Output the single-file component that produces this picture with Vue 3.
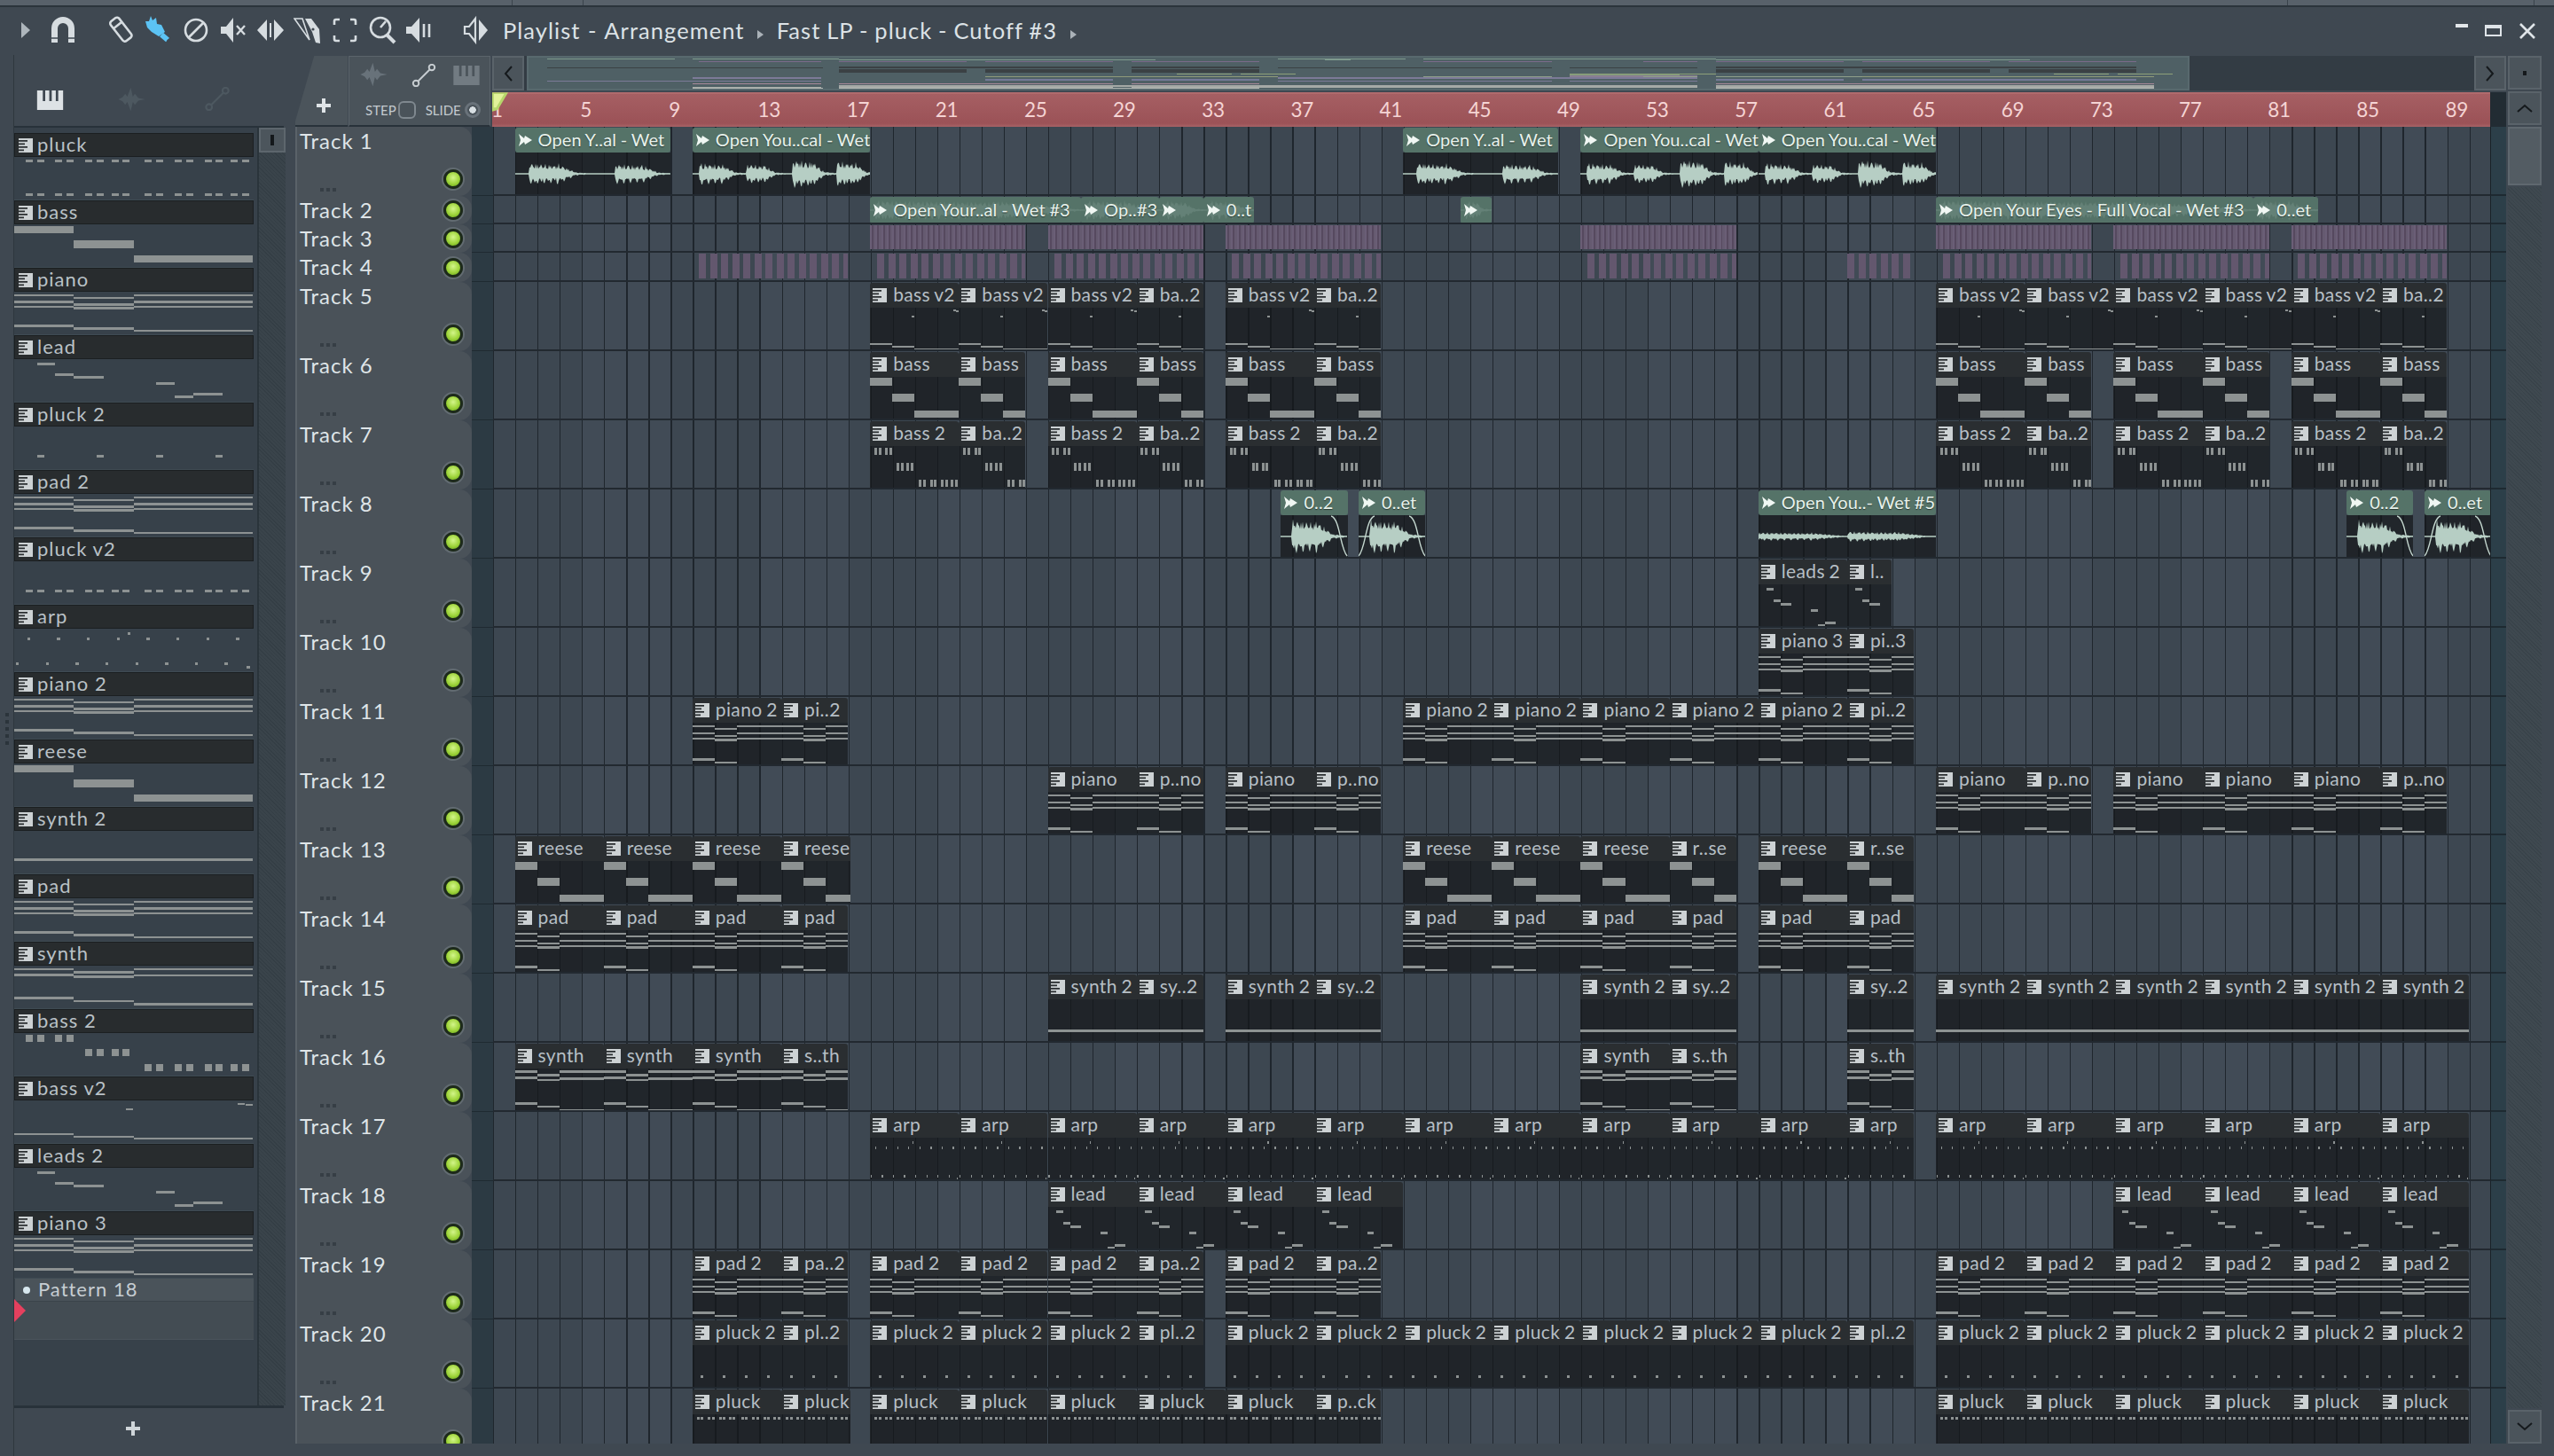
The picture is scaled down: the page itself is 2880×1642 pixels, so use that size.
<script setup>
const BAR = 25.04
const LIST_BAR = 67.25

const seg = (x, w, ys, h = 2.5) => ys.map(y => [x, w, y, h])
const dashX = [.19, .38, .69, .88, 1.19, 1.38, 1.63, 1.82, 2.19, 2.38, 2.69, 2.88, 3.19, 3.38, 3.63, 3.82]
const chord = [...seg(0, 1, [2.7, 10, 15.7, 37]), ...seg(1, 1, [5.7, 13, 17, 40]), ...seg(2, 2, [2.7, 10, 15.7, 42.7])]
const leadNotes = [[.38, .3, 3.7, 3], [.69, .31, 16.3, 3], [1, .5, 19.3, 3], [2.38, .31, 25.6, 3], [2.69, .31, 41.3, 3], [3, .5, 38.3, 3]]
const fatBars = [[0, 1, 1.7, 8.6], [1, 1, 18, 8.6], [2, 2, 34.5, 8.6]]
const arpNotes = [
  ...[0, 1, 2, 3, 4, 5, 6, 7].map(i => [.22 + i * .5, .05, 9.7, 3]),
  ...[0, 1, 2, 3, 4, 5, 6, 7].map(i => [.03 + i * .5, .05, 38.3, 3]),
  [1.9, .05, 3.7, 3], [3.9, .05, 41.7, 3],
]

const patterns = {
  pluck: [...dashX.map(x => [x, .12, 3.3, 3]), ...dashX.map(x => [x, .12, 41.3, 3])],
  bass: fatBars,
  piano: chord,
  lead: leadNotes,
  'pluck 2': [.38, 1.38, 2.38, 3.38].map(x => [x, .12, 31.6, 3]),
  'pad 2': chord,
  'pluck v2': dashX.map(x => [x, .12, 32, 3]),
  arp: arpNotes,
  'piano 2': chord,
  reese: fatBars,
  'synth 2': [[0, 4, 31.4, 3]],
  pad: chord,
  synth: [...seg(0, 1, [2.5, 9, 35]), ...seg(1, 1, [6, 11, 38.5]), ...seg(2, 2, [2.5, 9.5, 42])],
  'bass 2': dashX.map((x, i) => [x, .12, i < 4 ? 1.8 : i < 8 ? 18 : 34.6, 8.4]),
  'bass v2': [[0, 1, 37, 2], [1, 1, 39.6, 2], [2, 2, 42, 2], [1.88, .12, 9, 2], [3.75, .12, 2.5, 2], [3.88, .12, 3.5, 2]],
  'leads 2': leadNotes,
  'piano 3': chord,
}
const channels = Object.keys(patterns).map(name => ({ name, notes: patterns[name] }))

// "17-21 29-32:ba..2" -> clips of one pattern
const pat = (name, spec) => spec.split(' ').map(part => {
  const [range, label] = part.split(':')
  const [s, e] = range.split('-').map(Number)
  return { kind: 'pattern', s, e, label: label || name, notes: patterns[name] }
})

const vocalA = [[.63, 2.7, 13], [4.5, 6.4, 12]]
const vocalB = [[.3, 1.9, 13], [2.4, 3.7, 12], [4.5, 5.9, 17], [6.5, 7.8, 15]]
const vocalC = [[0, 3.8, 5], [4, 7.5, 6]]
const hit = [[.5, 2.3, 20]]

const audio = (s, e, label, events, fade = '') => ({ kind: 'audio', s, e, label, events, fade })
const slim = (s, e, label) => ({ kind: 'slim', s, e, label, events: [[.2, e - s - .4, 12]] })
const stripes = (kind, pairs) => pairs.map(([s, e]) => ({ kind, s, e }))

const from65 = '65-69 69-73 73-77 77-81 81-85 85-89'
const trackClips = [
  [audio(1, 8, 'Open Y..al - Wet', vocalA), audio(9, 17, 'Open You..cal - Wet', vocalB), audio(41, 48, 'Open Y..al - Wet', vocalA),
    audio(49, 57, 'Open You..cal - Wet', vocalB), audio(57, 65, 'Open You..cal - Wet', vocalB)],
  [slim(17, 26.5, 'Open Your..al - Wet #3'), slim(26.5, 30, 'Op..#3'), slim(30, 32, ''), slim(32, 34.3, '0..t'), slim(43.6, 45, ''),
    slim(65, 79.3, 'Open Your Eyes - Full Vocal - Wet #3'), slim(79.3, 82.2, '0..et')],
  stripes('fine', [[17, 24], [25, 32], [33, 40], [49, 56], [65, 72], [73, 80], [81, 88]]),
  stripes('pills', [[9.3, 16], [17.3, 24], [25.3, 32], [33.3, 40], [49.3, 56], [61, 64], [65.3, 72], [73.3, 80], [81.3, 88]]),
  pat('bass v2', '17-21 21-25 25-29 29-32:ba..2 33-37 37-40:ba..2 65-69 69-73 73-77 77-81 81-85 85-88:ba..2'),
  pat('bass', '17-21 21-24 25-29 29-32 33-37 37-40 65-69 69-72 73-77 77-80 81-85 85-88'),
  pat('bass 2', '17-21 21-24:ba..2 25-29 29-32:ba..2 33-37 37-40:ba..2 65-69 69-72:ba..2 73-77 77-80:ba..2 81-85 85-88:ba..2'),
  [audio(35.5, 38.5, '0..2', hit, 'out'), audio(39, 42, '0..et', hit, 'both'), audio(57, 65, 'Open You..- Wet #5', vocalC),
    audio(83.5, 86.5, '0..2', hit, 'out'), audio(87, 90, '0..et', hit, 'both')],
  pat('leads 2', '57-61 61-63:l..'),
  pat('piano 3', '57-61 61-64:pi..3'),
  pat('piano 2', '9-13 13-16:pi..2 41-45 45-49 49-53 53-57 57-61 61-64:pi..2'),
  pat('piano', '25-29 29-32:p..no 33-37 37-40:p..no 65-69 69-72:p..no 73-77 77-81 81-85 85-88:p..no'),
  pat('reese', '1-5 5-9 9-13 13-16.1 41-45 45-49 49-53 53-56:r..se 57-61 61-64:r..se'),
  pat('pad', '1-5 5-9 9-13 13-16 41-45 45-49 49-53 53-56 57-61 61-64'),
  pat('synth 2', `25-29 29-32:sy..2 33-37 37-40:sy..2 49-53 53-56:sy..2 61-64:sy..2 ${from65}`),
  pat('synth', '1-5 5-9 9-13 13-16:s..th 49-53 53-56:s..th 61-64:s..th'),
  pat('arp', `17-21 21-25 25-29 29-33 33-37 37-41 41-45 45-49 49-53 53-57 57-61 61-64 ${from65}`),
  pat('lead', '25-29 29-33 33-37 37-41 73-77 77-81 81-85 85-89'),
  pat('pad 2', `9-13 13-16:pa..2 17-21 21-25 25-29 29-32:pa..2 33-37 37-40:pa..2 ${from65}`),
  pat('pluck 2', `9-13 13-16:pl..2 17-21 21-25 25-29 29-32:pl..2 33-37 37-41 41-45 45-49 49-53 53-57 57-61 61-64:pl..2 ${from65}`),
  pat('pluck', `9-13 13-16.1 17-21 21-25 25-29 29-33 33-37 37-40:p..ck ${from65}`),
]

const smallTracks = [2, 3, 4]
const tracks = trackClips.map((clips, i) => ({ n: i + 1, small: smallTracks.includes(i + 1), clips }))

// overview row for each track: [top, height, colour]
const overviewRows = [
  [1, 1, '#7f9a8e'], [2, 1, '#7f9a8e'], [4, 1, '#7a6a8a'], [4, 1, '#7a6a8a'], [10, 2, '#3b4144'], [13, 2, '#3b4144'], [15, 2, '#3b4144'],
  [18, 1, '#8ea07a'], [19, 1, '#7f9a7a'], [20, 2, '#8a7f92'], [22, 2, '#7c7a98'], [24, 2, '#757a98'], [11, 1, '#3b4144'], [26, 1, '#7c7a98'],
  [21, 1, '#8f9f8a'], [26, 1, '#7c7a98'], [31, 2, '#a5a9a6'], [21, 1, '#8f9a7a'], [29, 1, '#a8899a'], [33, 1, '#a8aca8'], [34, 1, '#b4b8b4'],
]
const overview = tracks.flatMap((t, i) => t.clips.map(c => ({
  left: c.s * 20.6 + 'px', width: (c.e - c.s) * 20.6 + 'px',
  top: overviewRows[i][0] + 'px', height: overviewRows[i][1] + 'px', background: overviewRows[i][2],
})))

const rulerMarks = Array.from({ length: 23 }, (_, i) => 1 + i * 4)

const clipStyle = c => ({ left: c.s * BAR + 'px', width: (c.e - c.s) * BAR + 'px' })
const noteStyle = (n, unit, yScale) => ({
  left: n[0] * unit + 'px', width: n[1] * unit + 'px', top: n[2] * yScale + 'px', height: n[3] + 'px',
})

// fake but steady waveform, built from bars of [start, end, amplitude]
function wavePath(c, mid) {
  const width = Math.round((c.e - c.s) * BAR)
  const top = []
  const bottom = []
  for (let x = 0; x <= width; x++) {
    const bar = x / BAR
    let up = .7
    let down = .7
    for (const [s, e, amp] of c.events) {
      if (bar < s || bar > e + 1) continue
      const t = (bar - s) / (e - s)
      const env = t > 1 ? Math.max(0, 1 - (t - 1) * (e - s)) * .16 : t > .6 ? 1 - (t - .6) * 2 : 1 - t * .3
      const n1 = .42 + .58 * Math.abs(Math.sin(x * 1.7) * Math.cos(x * .63 + s))
      const n2 = .42 + .58 * Math.abs(Math.sin(x * 2.3 + 1) * Math.cos(x * .41 + e))
      up = Math.max(up, amp * env * n1)
      down = Math.max(down, amp * env * n2)
    }
    top.push(`${x} ${(mid - up).toFixed(1)}`)
    bottom.unshift(`${x} ${(mid + down).toFixed(1)}`)
  }
  return 'M' + top.join('L') + 'L' + bottom.join('L') + 'Z'
}
</script>

<template>
  <div class="app">
    <div class="top-strip"><i class="d1"></i><i class="d2"></i><i class="d3"></i><i class="d4"></i></div>

    <div class="titlebar">
      <span class="ico"><svg viewBox="0 0 32 32"><path d="M11 7l10 9-10 9z" fill="#aeb6bc"/></svg></span>
      <span class="ico"><svg viewBox="0 0 32 32"><path d="M3 30V14a13 13 0 0 1 26 0v16h-7V14a6 6 0 0 0-12 0v16z" fill="#d6dce0"/><path d="M3 25h7M22 25h7" stroke="#3e4750" stroke-width="1.5"/></svg></span>
      <span class="gap-a"></span>
      <span class="ico"><svg viewBox="0 0 32 32"><g transform="rotate(-38 16 16)" fill="none" stroke="#d6dce0" stroke-width="2.6"><rect x="10" y="1" width="12" height="28" rx="3"/><path d="M10 9h12"/></g></svg></span>
      <span class="ico"><svg viewBox="0 0 32 32"><path d="M7 0l2 5 4-3 1 7 5 1 4 8-7 5-8-5-5-5-2-7 4 0z" fill="#5cc3f4"/><path d="M19 21l7 6" stroke="#5cc3f4" stroke-width="6"/><circle cx="27" cy="28" r="1.8" fill="#3e4750"/></svg></span>
      <span class="ico"><svg viewBox="0 0 32 32"><circle cx="16" cy="16" r="12" fill="none" stroke="#d6dce0" stroke-width="2.6"/><path d="M8 24L24 8" stroke="#d6dce0" stroke-width="2.6"/></svg></span>
      <span class="ico"><svg viewBox="0 0 32 32"><path d="M2 12h6l8-10v28l-8-10H2z" fill="#d6dce0"/><path d="M20 11l9 10M29 11l-9 10" stroke="#d6dce0" stroke-width="2.4"/></svg></span>
      <span class="ico"><svg viewBox="0 0 32 32"><path d="M1 16l11-12v24zM31 16L20 4v24z" fill="#d6dce0"/><path d="M16 8v16" stroke="#d6dce0" stroke-width="2"/></svg></span>
      <span class="ico"><svg viewBox="0 0 32 32"><path d="M1 3h9l8 24z" fill="none" stroke="#d6dce0" stroke-width="1.6"/><path d="M13 3h7l9 12 1 16-5 -1-4-12z" fill="#d6dce0"/><circle cx="22" cy="15" r="1.6" fill="#3e4750"/></svg></span>
      <span class="ico"><svg viewBox="0 0 32 32"><path d="M10 4H6a2 2 0 0 0-2 2v4M22 4h4a2 2 0 0 1 2 2v4M10 28H6a2 2 0 0 1-2-2v-4M22 28h4a2 2 0 0 0 2-2v-4" fill="none" stroke="#d6dce0" stroke-width="2.6"/></svg></span>
      <span class="ico"><svg viewBox="0 0 32 32"><circle cx="14" cy="13" r="11" fill="none" stroke="#d6dce0" stroke-width="2.6"/><path d="M21 21l9 9" stroke="#d6dce0" stroke-width="4"/><path d="M14 13l6-7" stroke="#d6dce0" stroke-width="2.6"/></svg></span>
      <span class="ico"><svg viewBox="0 0 32 32"><path d="M1 12h6l9-10v28l-9-10H1z" fill="#d6dce0"/><path d="M21 9v15M27 9v15" stroke="#d6dce0" stroke-width="2.6"/></svg></span>
      <span class="gap-b"></span>
      <span class="ico"><svg viewBox="0 0 32 32"><path d="M3 12h5l7-9v26l-7-9H3z" fill="none" stroke="#d6dce0" stroke-width="2.2"/><path d="M19 4l10 12-10 12z" fill="#d6dce0"/></svg></span>
      <div class="title">
        Playlist - Arrangement <b class="sep"></b> <span class="title-b">Fast LP - pluck - Cutoff #3</span> <b class="sep"></b>
      </div>
      <div class="win-btns">
        <span class="win min"></span>
        <span class="win max"></span>
        <svg class="win-x" viewBox="0 0 20 20"><path d="M2 2l16 16M18 2L2 18" stroke="#dfe4e8" stroke-width="2.6"/></svg>
      </div>
    </div>

    <div class="body">
      <div class="edge"></div>

      <div class="channels">
        <div class="chan-tools">
          <svg class="t-piano" viewBox="0 0 32 24"><path d="M0 0h32v24H0z" fill="#dde2e5"/><path d="M7 0h3v13H7zM15 0h3v13h-3zM23 0h3v13h-3z" fill="#3e4750"/></svg>
          <svg class="t-wave" viewBox="0 0 40 36"><path d="M0 18l6-3 4-5 3 4 5-13 3 13 3-4 5 6 10 2-10 2-5 6-3-4-3 13-5-13-3 4-4-5z" fill="#4d5860"/></svg>
          <svg class="t-auto" viewBox="0 0 32 32"><circle cx="5" cy="27" r="4" fill="none" stroke="#4d5860" stroke-width="2.5"/><circle cx="27" cy="5" r="4" fill="none" stroke="#4d5860" stroke-width="2.5"/><path d="M8 24L24 8" stroke="#4d5860" stroke-width="2.5"/></svg>
        </div>
        <div class="chan-mid">
          <div class="chan-list">
            <div v-for="c in channels" :key="c.name" class="chan">
              <div class="chan-head">
                <svg class="roll" viewBox="0 0 16 16"><path d="M0 0h16v16H0z" fill="#cdd2d4"/><path d="M0 2h10v1.7H0zM0 5.5h7v1.7H0zM0 9h10v1.7H0zM0 12.5h6v1.7H0z" fill="#2a2e30"/></svg>
                <span>{{ c.name }}</span>
              </div>
              <div class="chan-prev">
                <i v-for="(n, i) in c.notes" :key="i" class="note" :style="noteStyle(n, LIST_BAR, 1)"></i>
              </div>
            </div>
            <div class="pattern-row"><b></b><span>Pattern 18</span></div>
            <div class="pattern-empty"></div>
            <svg class="sel-mark" viewBox="0 0 13 26"><path d="M0 0l13 13L0 26z" fill="#e5405e"/></svg>
          </div>
          <div class="chan-scroll">
            <div class="chan-btn"><i></i></div>
          </div>
          <div class="grip"><i></i><i></i><i></i><i></i><i></i></div>
        </div>
        <div class="chan-foot">
          <svg viewBox="0 0 16 16"><path d="M6 0h4v6h6v4h-6v6H6v-6H0V6h6z" fill="#cfd5d9"/></svg>
        </div>
      </div>

      <div class="play">
        <div class="main">
          <div class="head">
            <div class="tab"><svg viewBox="0 0 16 16"><path d="M6 0h4v6h6v4h-6v6H6v-6H0V6h6z" fill="#dfe4e7"/></svg></div>
            <div class="tools">
              <div class="tool-icons">
                <svg class="i-wave" viewBox="0 0 40 36"><path d="M0 18l6-3 4-5 3 4 5-13 3 13 3-4 5 6 10 2-10 2-5 6-3-4-3 13-5-13-3 4-4-5z" fill="#68727a"/></svg>
                <svg class="i-auto" viewBox="0 0 32 32"><circle cx="5" cy="27" r="4" fill="none" stroke="#c7cdd1" stroke-width="2.4"/><circle cx="27" cy="5" r="4" fill="none" stroke="#c7cdd1" stroke-width="2.4"/><path d="M8 24L24 8" stroke="#c7cdd1" stroke-width="2.4"/></svg>
                <svg class="i-piano" viewBox="0 0 32 24"><path d="M0 0h32v24H0z" fill="#727b82"/><path d="M7 0h3v13H7zM15 0h3v13h-3zM23 0h3v13h-3z" fill="#4b545b"/></svg>
              </div>
              <div class="tool-row">
                <span>STEP</span><b class="step-box"></b>
                <span class="slide">SLIDE</span><b class="radio"></b>
              </div>
            </div>
            <div class="timeline">
              <div class="over-row">
                <div class="nav"><svg viewBox="0 0 12 20"><path d="M10 2L3 10l7 8" fill="none" stroke="#15191c" stroke-width="2"/></svg></div>
                <div class="overview"><div class="over-inner"><i v-for="(o, i) in overview" :key="i" :style="o"></i></div></div>
                <div class="nav nav-r"><svg viewBox="0 0 12 20"><path d="M2 2l7 8-7 8" fill="none" stroke="#15191c" stroke-width="2"/></svg></div>
              </div>
              <div class="ruler-row">
                <div class="ruler">
                  <span v-for="m in rulerMarks" :key="m" class="mark" :style="{ left: (m - 1) * BAR + 'px' }">{{ m }}</span>
                  <svg class="playhead" viewBox="0 0 20 24"><path d="M0 0h20L7 22 0 24z" fill="#b6d66b"/><path d="M2 2h13L5 19H2z" fill="#e2f29a"/></svg>
                </div>
                <div class="ruler-end"></div>
              </div>
            </div>
          </div>

          <div class="tracks">
            <div v-for="t in tracks" :key="t.n" class="track" :class="{ small: t.small }">
              <div class="thead">
                <span class="tname">Track {{ t.n }}</span>
                <b class="led"></b>
                <em v-if="!t.small" class="dots"><i></i><i></i><i></i></em>
              </div>
              <div class="strip"></div>
              <div class="lane">
                <div v-for="(c, i) in t.clips" :key="i" class="clip" :class="c.kind" :style="clipStyle(c)">
                  <template v-if="c.kind === 'pattern'">
                    <div class="clip-head">
                      <svg class="roll" viewBox="0 0 16 16"><path d="M0 0h16v16H0z" fill="#cdd2d4"/><path d="M0 2h10v1.7H0zM0 5.5h7v1.7H0zM0 9h10v1.7H0zM0 12.5h6v1.7H0z" fill="#2a2e30"/></svg>
                      <span>{{ c.label }}</span>
                    </div>
                    <div class="clip-body">
                      <i v-for="(n, j) in c.notes" :key="j" class="note" :style="noteStyle(n, BAR, 1.1)"></i>
                    </div>
                  </template>
                  <template v-else-if="c.kind === 'audio'">
                    <div class="clip-head green">
                      <svg class="play-ico" viewBox="0 0 16 14"><path d="M1 0l6 5 1-3 8 5-8 5-1-3-6 5 2-7z" fill="#f0f7f3"/></svg>
                      <span>{{ c.label }}</span>
                    </div>
                    <div class="clip-body">
                      <svg class="wave" :width="(c.e - c.s) * BAR" height="47">
                        <path :d="wavePath(c, 24)" fill="#b6cec4"/>
                        <path v-if="c.fade === 'out' || c.fade === 'both'" :d="`M${(c.e - c.s) * BAR - 18} 1 C${(c.e - c.s) * BAR - 8} 4 ${(c.e - c.s) * BAR - 8} 38 ${(c.e - c.s) * BAR} 46`" fill="none" stroke="#c5d8d0" stroke-width="1.4"/>
                        <path v-if="c.fade === 'both'" d="M0 46 C8 38 8 4 18 1" fill="none" stroke="#c5d8d0" stroke-width="1.4"/>
                      </svg>
                    </div>
                  </template>
                  <template v-else-if="c.kind === 'slim'">
                    <div class="clip-head green full">
                      <svg class="wave faint" :width="(c.e - c.s) * BAR" height="30"><path :d="wavePath(c, 15)" fill="#b6cec4"/></svg>
                      <svg class="play-ico" viewBox="0 0 16 14"><path d="M1 0l6 5 1-3 8 5-8 5-1-3-6 5 2-7z" fill="#f0f7f3"/></svg>
                      <span>{{ c.label }}</span>
                    </div>
                  </template>
                </div>
              </div>
              <div class="lane-end"></div>
            </div>
          </div>
        </div>

        <div class="vscroll">
          <div class="vbtn"><i class="dot"></i></div>
          <div class="vbtn"><svg viewBox="0 0 20 12"><path d="M2 10l8-7 8 7" fill="none" stroke="#15191c" stroke-width="2"/></svg></div>
          <div class="thumb"></div>
          <div class="hatch"></div>
          <div class="vbtn last"><svg viewBox="0 0 20 12"><path d="M2 2l8 7 8-7" fill="none" stroke="#15191c" stroke-width="2"/></svg></div>
        </div>
      </div>
    </div>
  </div>
</template>

<style>
html, body { margin: 0; background: #3f4851; }
</style>

<style scoped>
.app { width: 2880px; height: 1642px; display: flex; flex-direction: column; overflow: hidden; background: #3f4851; font-family: Lato, "Open Sans", sans-serif; color: #d6dde1; }

.top-strip { height: 6px; background: #58616a; border-bottom: 2px solid #2b343b; position: relative; flex: none; }
.top-strip i { position: absolute; top: 0; width: 1px; height: 6px; background: #3a434b; }
.d1 { left: 577px; }
.d2 { left: 657px; }
.d3 { left: 2579px; }
.d4 { left: 2857px; }

.titlebar { height: 54px; display: flex; align-items: center; padding: 0 0 3px 8px; box-sizing: border-box; flex: none; }
.ico { width: 42px; height: 32px; display: flex; justify-content: center; flex: none; }
.ico svg { width: 32px; height: 32px; }
.gap-a { width: 24px; }
.gap-b { width: 22px; }
.title { margin-left: 9px; font-size: 25.5px; letter-spacing: 1.05px; color: #dce2e6; white-space: nowrap; word-spacing: 1px; }
.title-b { word-spacing: -.7px; }
.sep { display: inline-block; border-left: 7px solid #aab2b8; border-top: 5px solid transparent; border-bottom: 5px solid transparent; margin: 0 6px; }
.win-btns { margin-left: auto; display: flex; align-items: center; padding: 2px 20px 0 0; }
.win { display: block; }
.min { width: 14px; height: 4px; background: #e3e7ea; margin-right: 19px; margin-top: -12px; }
.max { width: 15px; height: 7px; border: 2px solid #dfe4e8; border-top-width: 4px; margin-right: 19px; }
.win-x { width: 20px; height: 20px; }

.body { flex: 1; display: flex; min-height: 0; }
.edge { width: 15px; border-right: 1px solid #2e373e; flex: none; }

.channels { width: 317px; display: flex; flex-direction: column; flex: none; }
.chan-tools { height: 80px; position: relative; flex: none; }
.t-piano { position: absolute; left: 25px; top: 40px; width: 31px; height: 22px; }
.t-wave { position: absolute; left: 113px; top: 36px; width: 40px; height: 28px; }
.t-auto { position: absolute; left: 213px; top: 36px; width: 32px; height: 27px; }

.chan-mid { flex: 1; display: flex; min-height: 0; position: relative; border-top: 2px solid #28323a; border-bottom: 3px solid #28323a; margin-right: 13px; background: #37414a; }
.chan-list { width: 270px; padding-top: 6px; position: relative; flex: none; }
.chan { height: 76px; }
.chan-head { height: 27px; box-sizing: border-box; background: #282c2e; border: 1px solid #1b1f21; display: flex; align-items: center; font-size: 22px; letter-spacing: 1px; color: #b9c1c6; padding-bottom: 2px; }
.roll { width: 16px; height: 16px; flex: none; margin: 2px 5px 0 4px; }
.chan-prev { height: 49px; position: relative; border-bottom: 1px solid #3f4b53; box-sizing: border-box; }
.note { position: absolute; background: #8d9292; display: block; }
.pattern-row { height: 26px; background: #4a535a; border-bottom: 1px solid #3a434b; display: flex; align-items: center; font-size: 22px; letter-spacing: 1px; color: #c6cdd2; box-sizing: border-box; margin-left: 1px; padding-bottom: 2px; }
.pattern-row b { width: 8px; height: 8px; border-radius: 50%; background: #d7e7ee; margin: 2px 9px 0 9px; }
.pattern-empty { height: 42px; background: #434c53; border-bottom: 1px solid #4b545b; }
.sel-mark { position: absolute; left: 0; top: 1321px; width: 13px; height: 26px; }
.chan-scroll { width: 30px; margin-left: 4px; border-left: 2px solid #2a343b; background: repeating-linear-gradient(45deg, #343e45 0 1px, #3a444b 1px 3px); flex: none; }
.chan-btn { height: 28px; margin: 0; background: #4c555c; border: 2px solid #5d666d; box-sizing: border-box; display: flex; align-items: center; justify-content: center; }
.chan-btn i { width: 4px; height: 12px; background: #14181b; }
.grip { position: absolute; left: -10px; top: 660px; display: flex; flex-direction: column; gap: 4px; }
.grip i { width: 4px; height: 4px; background: #2b343b; }
.chan-foot { height: 54px; display: flex; align-items: center; justify-content: center; padding: 0 49px 8px 0; box-sizing: border-box; flex: none; }
.chan-foot svg { width: 16px; height: 16px; }

.play { flex: 1; display: flex; padding-bottom: 14px; min-width: 0; }
.main { width: 2493px; display: flex; flex-direction: column; flex: none; }
.head { height: 81px; display: flex; flex: none; }
.tab { width: 59px; margin-top: 1px; background: #4b545b; clip-path: polygon(36% 0, 100% 0, 100% 100%, 0 100%, 0 92%); display: flex; align-items: flex-end; justify-content: center; padding-bottom: 14px; box-sizing: border-box; margin-right: 1px; border-bottom: 2px solid #28323a; }
.tab svg { width: 16px; height: 16px; margin-left: 4px; }
.tools { width: 160px; background: #4a535a; border: 1px solid #5b646b; border-bottom: 2px solid #28323a; box-sizing: border-box; margin-top: 1px; flex: none; margin-right: 2px; }
.tool-icons { height: 38px; position: relative; }
.i-wave { position: absolute; left: 8px; top: 6px; width: 40px; height: 28px; }
.i-auto { position: absolute; left: 68px; top: 8px; width: 32px; height: 26px; }
.i-piano { position: absolute; left: 117px; top: 10px; width: 30px; height: 22px; }
.tool-row { display: flex; align-items: center; font-size: 15px; color: #c3cacf; padding: 12px 0 0 18px; }
.step-box { width: 20px; height: 20px; border: 2px solid #7f888f; border-radius: 6px; margin-left: 2px; box-sizing: border-box; }
.slide { margin-left: 11px; }
.radio { width: 18px; height: 18px; border: 3px solid #69727a; border-radius: 50%; margin-left: 4px; background: radial-gradient(circle, #d8dfe3 0 3.5px, #4a535a 4px); box-sizing: border-box; }

.timeline { flex: 1; min-width: 0; display: flex; flex-direction: column; }
.over-row { height: 39px; margin-top: 1px; display: flex; background: #333c44; }
.nav { width: 36px; background: #4b545b; border: 2px solid #5a636a; box-sizing: border-box; display: flex; align-items: center; justify-content: center; flex: none; }
.nav svg { width: 12px; height: 20px; }
.overview { width: 1875px; margin-left: 3px; background: #4f6065; border: 2px solid #58696e; box-sizing: border-box; position: relative; overflow: hidden; }
.over-inner { position: absolute; inset: 0; }
.over-inner i { position: absolute; display: block; }
.nav-r { margin-left: auto; }
.ruler-row { height: 39px; margin-top: 2px; display: flex; }
.ruler { width: 2252.5px; position: relative; overflow: hidden; background: linear-gradient(#b06a6d 0 2px, #a65f63 2px, #9b5257 90%, #a86266); flex: none; font-size: 22.5px; letter-spacing: -.3px; color: #f5d4d4; }
.mark { position: absolute; top: 6px; line-height: 28px; margin-left: -1px; }
.playhead { position: absolute; left: 0; top: 0; width: 18px; height: 22px; }
.ruler-end { flex: 1; background: #222c33; }

.tracks { flex: 1; overflow: hidden; min-height: 0; }
.track { height: 78px; display: flex; position: relative; }
.track.small { height: 32.2px; }
.thead { width: 199px; background: #4a5259; border-radius: 0 14px 14px 0; position: relative; flex: none; box-sizing: border-box; border-left: 2px solid #5a6269; }
.tname { position: absolute; left: 3px; top: 1px; font-size: 24px; letter-spacing: 1px; color: #dfe5e8; line-height: 30px; }
.led { position: absolute; right: 10px; bottom: 8px; width: 22px; height: 22px; box-sizing: border-box; border-radius: 50%; border: 3px solid #1d2a1a; box-shadow: 0 0 0 2px #626b71; background: radial-gradient(circle at 50% 40%, #d3f58a 0, #9ed43a 55%, #5c9a16 100%); }
.small .led { bottom: 5px; }
.dots { position: absolute; left: 26px; bottom: 5px; display: flex; gap: 3px; }
.dots i { width: 4px; height: 4px; background: #363e45; }
.strip { width: 23.5px; background: #2c3a43; border-bottom: 1px solid #1f2a31; box-sizing: border-box; flex: none; }
.lane { width: 2252.5px; position: relative; overflow: hidden; flex: none; box-sizing: border-box; border-bottom: 2px solid #222930;
  background:
    repeating-linear-gradient(90deg, #1f262d 0 1.3px, transparent 1.3px 25.04px),
    repeating-linear-gradient(90deg, #3d4751 0 100.16px, #414b56 100.16px 200.32px); }
.lane-end { flex: 1; background: #2c3f49; border-bottom: 2px solid #1e2a31; border-left: 1px solid #1a2228; box-sizing: border-box; }

.clip { position: absolute; top: 1px; bottom: 0; overflow: hidden; }
.clip-head { height: 28px; display: flex; align-items: center; background: #2a2e31; border-radius: 3px 3px 0 0; font-size: 21px; letter-spacing: .35px; word-spacing: -1px; color: #b6bfc5; white-space: nowrap; overflow: hidden; padding-bottom: 2px; box-sizing: border-box; position: relative; }
.clip-head .roll { margin: 2px 7px 0 3px; }
.clip-head.green { background: #557368; color: #e8f2ec; border-radius: 3px; text-shadow: 0 1px 1px #2a3a34; font-size: 20px; letter-spacing: .1px; word-spacing: -.5px; }
.play-ico { width: 16px; height: 14px; flex: none; margin: 2px 7px 0 3px; position: relative; }
.clip-head.full { height: 30px; }
.clip-head span { position: relative; }
.clip-body { position: absolute; left: 0; right: 0; top: 28px; bottom: 0; background: rgba(21, 23, 26, .72); }
.wave { position: absolute; left: 0; top: 0; }
.wave.faint { opacity: .16; }
.fine { background: repeating-linear-gradient(90deg, #6a5e76 0 2px, #56495f 2px 4px, #655a70 4px 6.26px); }
.pills { background: repeating-linear-gradient(90deg, #63576e 0 8px, transparent 8px 12.52px); }
.small .clip.fine, .small .clip.pills { top: 1px; bottom: 2px; }

.vscroll { width: 38px; margin-left: 2px; display: flex; flex-direction: column; gap: 2px; padding-top: 1px; flex: none; }
.vbtn { height: 38px; background: #4b545b; border: 2px solid #5a636a; box-sizing: border-box; display: flex; align-items: center; justify-content: center; flex: none; }
.vbtn svg { width: 20px; height: 12px; }
.vbtn .dot { width: 4px; height: 5px; background: #15191c; }
.thumb { height: 66px; background: #535c63; border: 2px solid #5f686f; box-sizing: border-box; flex: none; }
.hatch { flex: 1; background: repeating-linear-gradient(45deg, #39434a 0 1px, #3f4950 1px 3px); }
</style>
